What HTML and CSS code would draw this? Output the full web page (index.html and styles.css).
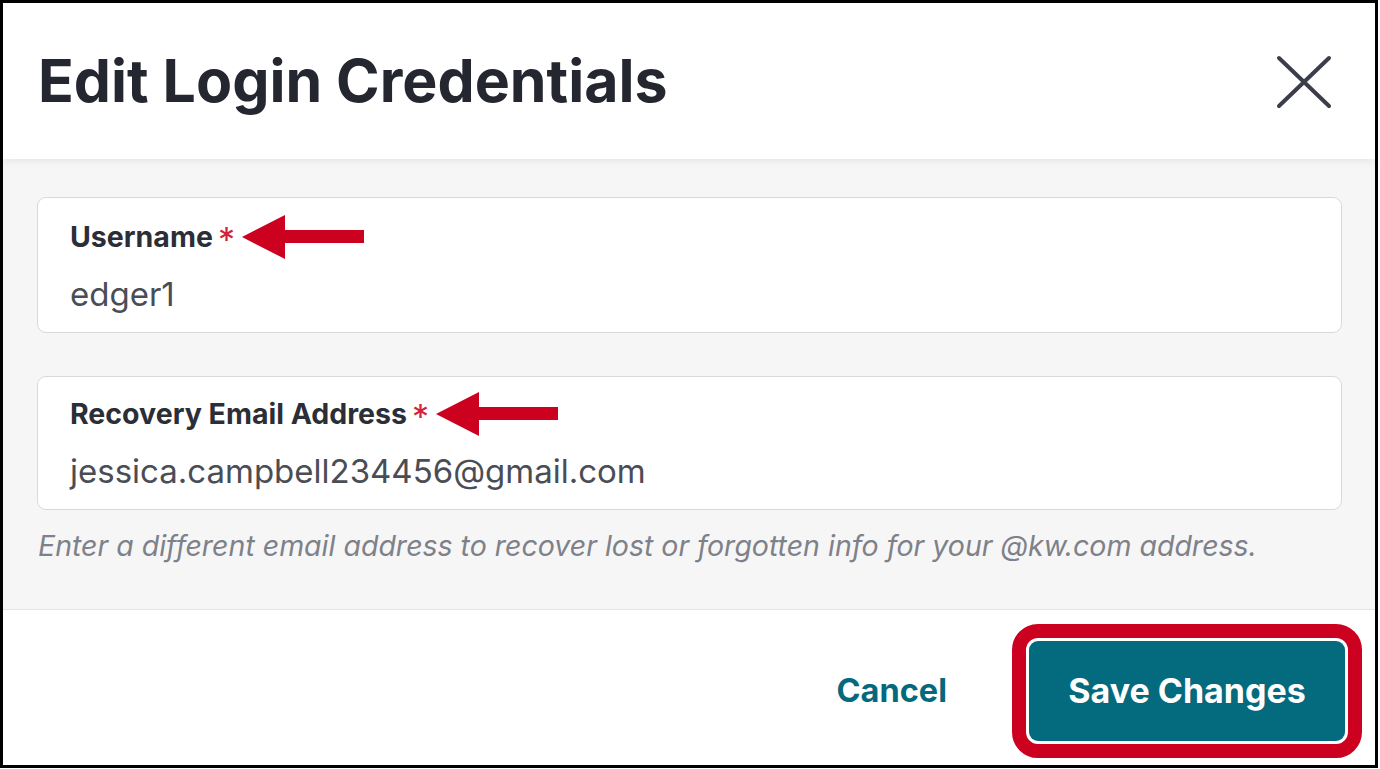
FILE: index.html
```html
<!DOCTYPE html>
<html lang="en">
<head>
<meta charset="utf-8">
<title>Edit Login Credentials</title>
<link rel="stylesheet" href="styles.css">
</head>
<body>
<div class="frame">
  <header class="modal-header">
    <h1 class="title">Edit Login Credentials</h1>
    <button class="close" aria-label="Close">
      <svg width="56" height="54" viewBox="0 0 56 54"><path d="M3 3 L53 51 M53 3 L3 51" stroke="#3a3e48" stroke-width="4" stroke-linecap="round" fill="none"/></svg>
    </button>
  </header>
  <main class="modal-body">
    <div class="field">
      <div class="label">Username<span class="req">*</span><svg class="arrow" width="122" height="44" viewBox="0 0 122 44"><path d="M0 22 L43 0 L43 15 L122 15 L122 28 L43 28 L43 44 Z" fill="#cc001f"/></svg></div>
      <div class="value">edger1</div>
    </div>
    <div class="field field-2">
      <div class="label">Recovery Email Address<span class="req">*</span><svg class="arrow" width="122" height="44" viewBox="0 0 122 44"><path d="M0 22 L43 0 L43 15 L122 15 L122 28 L43 28 L43 44 Z" fill="#cc001f"/></svg></div>
      <div class="value">jessica.campbell234456@gmail.com</div>
    </div>
    <p class="help">Enter a different email address to recover lost or forgotten info for your @kw.com address.</p>
  </main>
  <footer class="modal-footer">
    <button class="cancel">Cancel</button>
    <span class="highlight"><button class="save">Save Changes</button></span>
  </footer>
</div>
</body>
</html>
```

FILE: styles.css
```css
* { box-sizing: border-box; }
html, body { margin: 0; padding: 0; background: #fff; }
body { font-family: Inter, Lato, sans-serif; }

.frame {
  width: 1378px;
  height: 768px;
  border: 3px solid #000;
  display: flex;
  flex-direction: column;
  background: #fff;
}

.modal-header {
  height: 156px;
  flex: none;
  display: flex;
  align-items: center;
  justify-content: space-between;
  padding: 0 43px 0 35px;
  background: #fff;
  position: relative;
  z-index: 1;
  box-shadow: 0 2px 8px rgba(0,0,0,0.07);
}
.title {
  margin: 0;
  font-size: 59px;
  font-weight: 700;
  color: #24272f;
  line-height: 70px;
}
.close {
  border: none;
  background: none;
  padding: 0;
  display: block;
  margin-top: 2px;
}
.close svg { display: block; }

.modal-body {
  flex: none;
  height: 451px;
  background: #f6f6f6;
  padding: 38px 33px 0 34px;
  border-bottom: 1px solid #e4e4e4;
}
.field {
  background: #fff;
  border: 1px solid #d8d9dc;
  border-radius: 9px;
  height: 136px;
  padding: 22px 32px 0;
}
.field-2 { margin-top: 43px; height: 134px; padding-top: 20px; }
.label {
  font-size: 28.5px;
  font-weight: 700;
  color: #2b2e36;
  line-height: 34px;
  height: 34px;
  display: flex;
  align-items: center;
}
.req {
  color: #d3223a;
  margin-left: 5px;
  font-weight: 400;
  font-size: 34px;
  line-height: 34px;
  padding-top: 6px;
}
.arrow { margin-left: 7px; flex: none; }
.value {
  margin-top: 20px;
  font-size: 33px;
  color: #4a4d55;
  line-height: 40px;
}
.help {
  margin: 18px 0 0 1px;
  font-size: 28.5px;
  font-style: italic;
  color: #7e8189;
  line-height: 36px;
}

.modal-footer {
  flex: 1;
  display: flex;
  align-items: center;
  justify-content: flex-end;
  padding: 6px 13px 0 0;
}
.cancel {
  border: none;
  background: none;
  font-family: inherit;
  font-size: 32.5px;
  font-weight: 700;
  color: #05697d;
  margin-right: 65px;
  padding: 0;
}
.highlight {
  display: flex;
  border: 14px solid #cc001f;
  border-radius: 26px;
  padding: 3px;
  background: #fff;
}
.save {
  width: 316px;
  height: 100px;
  border: none;
  border-radius: 9px;
  background: #046a7e;
  color: #fff;
  font-family: inherit;
  font-size: 34px;
  font-weight: 700;
  padding: 0;
}
```
